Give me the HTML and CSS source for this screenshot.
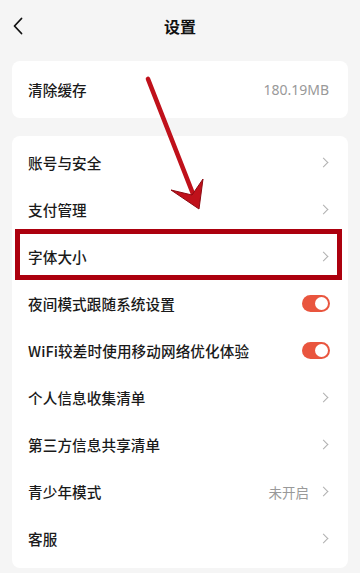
FILE: index.html
```html
<!DOCTYPE html>
<html lang="zh-CN">
<head>
<meta charset="utf-8">
<link rel="stylesheet" href="styles.css">
</head>
<body>
<div class="page">
  <header class="header">
    <svg class="back" width="12" height="18" viewBox="0 0 12 18"><path d="M9.5 1.5 L2.5 9 L9.5 16.5" fill="none" stroke="#111" stroke-width="1.8" stroke-linecap="round" stroke-linejoin="round"/></svg>
    <div class="title">设置</div>
  </header>

  <section class="card card-cache">
    <div class="row"><span class="label">清除缓存</span><span class="value">180.19MB</span></div>
  </section>

  <section class="card card-list">
    <div class="row"><span class="label">账号与安全</span><span class="chev"></span></div>
    <div class="row"><span class="label">支付管理</span><span class="chev"></span></div>
    <div class="row row-hl"><span class="label">字体大小</span><span class="chev"></span><span class="hl"></span></div>
    <div class="row"><span class="label">夜间模式跟随系统设置</span><span class="toggle"><span class="knob"></span></span></div>
    <div class="row"><span class="label">WiFi较差时使用移动网络优化体验</span><span class="toggle"><span class="knob"></span></span></div>
    <div class="row"><span class="label">个人信息收集清单</span><span class="chev"></span></div>
    <div class="row"><span class="label">第三方信息共享清单</span><span class="chev"></span></div>
    <div class="row"><span class="label">青少年模式</span><span class="value value-chev">未开启</span><span class="chev"></span></div>
    <div class="row"><span class="label">客服</span><span class="chev"></span></div>
  </section>

  <svg class="arrow" width="360" height="573" viewBox="0 0 360 573">
    <line x1="148" y1="79" x2="195" y2="199" stroke="#c0111b" stroke-width="4.6" stroke-linecap="round"/>
    <polygon points="199,209 171,190 192,195 203,179" fill="#c0111b" stroke="#8c0a12" stroke-width="1" stroke-linejoin="round"/>
  </svg>
</div>
</body>
</html>
```

FILE: styles.css
```css
html, body {
  margin: 0;
  padding: 0;
}
body {
  background: #f5f5f5;
  font-family: "Noto Sans CJK SC", "Noto Sans", sans-serif;
  color: #1e1e1e;
  width: 360px;
  height: 573px;
  overflow: hidden;
}
.page {
  position: relative;
  width: 360px;
  height: 573px;
}
.header {
  position: relative;
  height: 52px;
  display: flex;
  align-items: center;
  justify-content: center;
}
.back {
  position: absolute;
  left: 12px;
  top: 17px;
}
.title {
  font-size: 16px;
  font-weight: 700;
  color: #111;
  line-height: 1;
  margin-top: 0;
}
.card {
  background: #fff;
  margin: 0 12px;
  border-radius: 8px;
}
.card-cache {
  margin-top: 9px;
  height: 57px;
  display: flex;
  align-items: center;
}
.card-cache .row {
  flex: 1;
}
.card-list {
  margin-top: 18px;
  padding: 3px 0 6px;
}
.row {
  position: relative;
  height: 47px;
  display: flex;
  align-items: center;
  padding: 0 19px 0 16px;
}
.label {
  flex: 1;
  font-size: 14.6px;
  font-weight: 500;
  color: #1a1a1a;
  letter-spacing: 0.1px;
}
.value {
  font-size: 14px;
  color: #999;
  font-family: "Noto Sans", "Noto Sans CJK SC", sans-serif;
}
.value-chev {
  margin-right: 11px;
  font-family: "Noto Sans CJK SC", sans-serif;
  font-size: 13.5px;
}
.chev {
  width: 6px;
  height: 6px;
  border-top: 1.3px solid #b0b0b0;
  border-right: 1.3px solid #b0b0b0;
  transform: rotate(45deg);
  margin-right: 2px;
}
.toggle {
  position: relative;
  width: 28px;
  height: 17px;
  border-radius: 9px;
  background: #e9553e;
  margin-right: -1px;
}
.knob {
  position: absolute;
  right: 2px;
  top: 2px;
  width: 13px;
  height: 13px;
  border-radius: 50%;
  background: #fff;
}
.hl {
  position: absolute;
  left: 3px;
  right: 6px;
  top: -4px;
  bottom: 0;
  border: 5.5px solid #ac000e;
  pointer-events: none;
}
.arrow {
  position: absolute;
  left: 0;
  top: 0;
  pointer-events: none;
}
```
